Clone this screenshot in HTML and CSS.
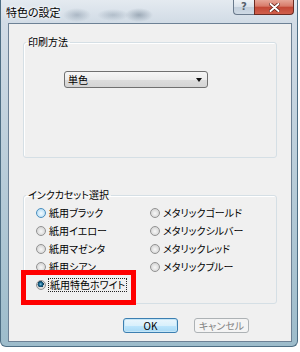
FILE: index.html
```html
<!DOCTYPE html>
<html>
<head>
  <meta charset="utf-8">
  <title>特色の設定</title>
  <link rel="stylesheet" href="styles.css">
</head>
<body>

  <div class="window">
    <div class="titlebar">
      <span class="title">特色の設定</span>
      <div class="caption-buttons">
        <div class="cap-btn help">?</div>
        <div class="cap-btn close">
          <svg width="11" height="9" viewBox="0 0 11 9">
            <path d="M1.5 1 L9.5 8 M9.5 1 L1.5 8" stroke="#5a1a12" stroke-width="3.4" stroke-linecap="round"/>
            <path d="M1.5 1 L9.5 8 M9.5 1 L1.5 8" stroke="#ffffff" stroke-width="2" stroke-linecap="round"/>
          </svg>
        </div>
      </div>
    </div>

    <div class="client">
      <fieldset class="group">
        <legend>印刷方法</legend>
        <div class="method-body">
          <div class="combo">
            <span>単色</span>
            <span class="arrow"></span>
          </div>
        </div>
      </fieldset>

      <fieldset class="group ink-group">
        <legend>インクカセット選択</legend>
        <div class="radio-grid">
          <label class="radio"><span class="dot hover"></span>紙用ブラック</label>
          <label class="radio"><span class="dot"></span>紙用イエロー</label>
          <label class="radio"><span class="dot"></span>紙用マゼンタ</label>
          <label class="radio"><span class="dot"></span>紙用シアン</label>
          <label class="radio"><span class="dot checked"></span><span class="focus">紙用特色ホワイト</span></label>
          <label class="radio"><span class="dot"></span>メタリックゴールド</label>
          <label class="radio"><span class="dot"></span>メタリックシルバー</label>
          <label class="radio"><span class="dot"></span>メタリックレッド</label>
          <label class="radio"><span class="dot"></span>メタリックブルー</label>
        </div>
      </fieldset>

      <div class="buttons">
        <button class="btn default">OK</button>
        <button class="btn" disabled>キャンセル</button>
      </div>

      <!-- red callout around the selected option -->
      <div class="highlight"></div>
    </div>
  </div>

</body>
</html>
```

FILE: styles.css
```css
body {
  margin: 0;
  padding: 0;
  background-color: white;
  font-family: 'Noto Sans CJK JP', sans-serif;
  font-size: 10px;
  line-height: 12px;
  font-feature-settings: "palt";
  color: black;
}

.window {
  box-sizing: border-box;
  width: 298px;
  height: 347px;
  padding: 0 5px 4px 7px;
  display: flex;
  flex-direction: column;
  border: 1px solid #4e6e84;
  border-top: none;
  border-radius: 0 0 6px 6px;
  background:
    radial-gradient(ellipse 14px 7px at 76px 15px, rgba(90, 110, 130, 0.35), transparent),
    radial-gradient(ellipse 16px 6px at 112px 15px, rgba(90, 110, 130, 0.3), transparent),
    radial-gradient(ellipse 14px 7px at 138px 15px, rgba(70, 90, 110, 0.4), transparent),
    linear-gradient(to bottom, #e4eaf0 0, #d2dce6 22px, #b3c9d6 60%, #9dbccb 100%);
}

/* Title bar */
.titlebar {
  height: 23px;
  flex: none;
  display: flex;
  justify-content: space-between;
  align-items: flex-start;
  margin-left: -2px;
  margin-right: -3px;
}

.title {
  padding-top: 5px;
  font-size: 11px;
  line-height: 14px;
  text-shadow: 0 0 5px #ffffff, 0 0 3px #ffffff;
}

.caption-buttons {
  display: flex;
  margin-right: 1px;
}

.cap-btn {
  box-sizing: border-box;
  height: 15px;
  display: flex;
  align-items: center;
  justify-content: center;
  border: 1px solid #6a7a8c;
  border-top: none;
}

.cap-btn.help {
  width: 21px;
  border-right: none;
  border-radius: 0 0 0 4px;
  background: linear-gradient(to bottom, #eef2f6 0, #d9e1ea 50%, #c2cedb 51%, #cfdae5 100%);
  color: #55606c;
  font-family: 'DejaVu Sans', sans-serif;
  font-size: 10px;
  font-weight: bold;
}

.cap-btn.close {
  width: 40px;
  border-color: #6b2b22;
  border-radius: 0 0 4px 0;
  background: linear-gradient(to bottom, #e6a597 0, #d77a69 45%, #c24634 50%, #d0604c 100%);
}

/* Client area */
.client {
  flex: 1;
  position: relative;
  padding: 12px 14px 0 14px;
  border: 1px solid #6d8195;
  background-color: #f0f0f0;
}

.group {
  margin: 0;
  padding: 0;
  min-width: 0;
  border: 1px solid #d5dfe5;
  border-radius: 3px;
  box-shadow: inset 1px 1px 0 #ffffff;
}

.group legend {
  margin-left: 2px;
  padding: 0 2px;
  line-height: 12px;
}

.method-body {
  box-sizing: border-box;
  height: 109px;
  padding: 23px 0 0 40px;
}

.combo {
  box-sizing: border-box;
  width: 144px;
  height: 17px;
  display: flex;
  align-items: center;
  justify-content: space-between;
  padding: 0 5px 0 3px;
  border: 1px solid #707070;
  border-radius: 3px;
  background: linear-gradient(to bottom, #f6f6f6 0, #ececec 50%, #dddddd 51%, #d4d4d4 100%);
}

.combo .arrow {
  width: 0;
  height: 0;
  border-left: 3px solid transparent;
  border-right: 3px solid transparent;
  border-top: 4px solid #111;
}

.ink-group {
  margin-top: 31px;
}

.radio-grid {
  display: grid;
  grid-template-rows: repeat(5, 18px);
  grid-template-columns: 114px auto;
  grid-auto-flow: column;
  padding: 3px 0 9px 12px;
}

.radio {
  display: flex;
  align-items: center;
  gap: 3px;
  white-space: nowrap;
}

.dot {
  box-sizing: border-box;
  width: 10px;
  height: 10px;
  flex: none;
  border: 1px solid #929292;
  border-radius: 50%;
  background: radial-gradient(circle at 50% 55%, #f8f8f8 0, #dcdcdc 60%, #cfcfcf 100%);
}

.dot.hover {
  border-color: #4a8fbf;
  background: radial-gradient(circle at 50% 55%, #f4fbff 0, #c9e6f8 55%, #9ccbea 100%);
}

.dot.checked {
  background:
    radial-gradient(circle at 45% 40%, #8ec9e8 0, #1a6b93 1.5px, #0d3f5c 3px, transparent 3.2px),
    radial-gradient(circle, #e8e8e8 0, #cfcfcf 100%);
}

.focus {
  outline: 1px dotted #222;
  outline-offset: 0;
  padding: 0 1px;
}

/* Dialog buttons */
.buttons {
  display: flex;
  gap: 16px;
  margin-top: 14px;
  padding-left: 100px;
}

.btn {
  box-sizing: border-box;
  width: 55px;
  height: 15px;
  padding: 0;
  border: 1px solid #707070;
  border-radius: 3px;
  font-family: 'Noto Sans CJK JP', sans-serif;
  font-size: 10px;
  line-height: 12px;
  font-feature-settings: "palt";
  color: black;
  background: linear-gradient(to bottom, #f2f2f2 0, #ebebeb 50%, #dddddd 51%, #cfcfcf 100%);
}

.btn.default {
  border-color: #3c7fb1;
  box-shadow: inset 0 0 0 1px #c4e5f6;
  background: linear-gradient(to bottom, #eaf6fd 0, #d9f0fc 50%, #bee6fd 51%, #a7d9f5 100%);
}

.btn:disabled {
  border-color: #adb2b5;
  background: #f4f4f4;
  color: #838383;
}

/* Red callout */
.highlight {
  position: absolute;
  left: 12px;
  top: 246px;
  box-sizing: border-box;
  width: 115px;
  height: 35px;
  border: 5px solid #ff0000;
}
```
